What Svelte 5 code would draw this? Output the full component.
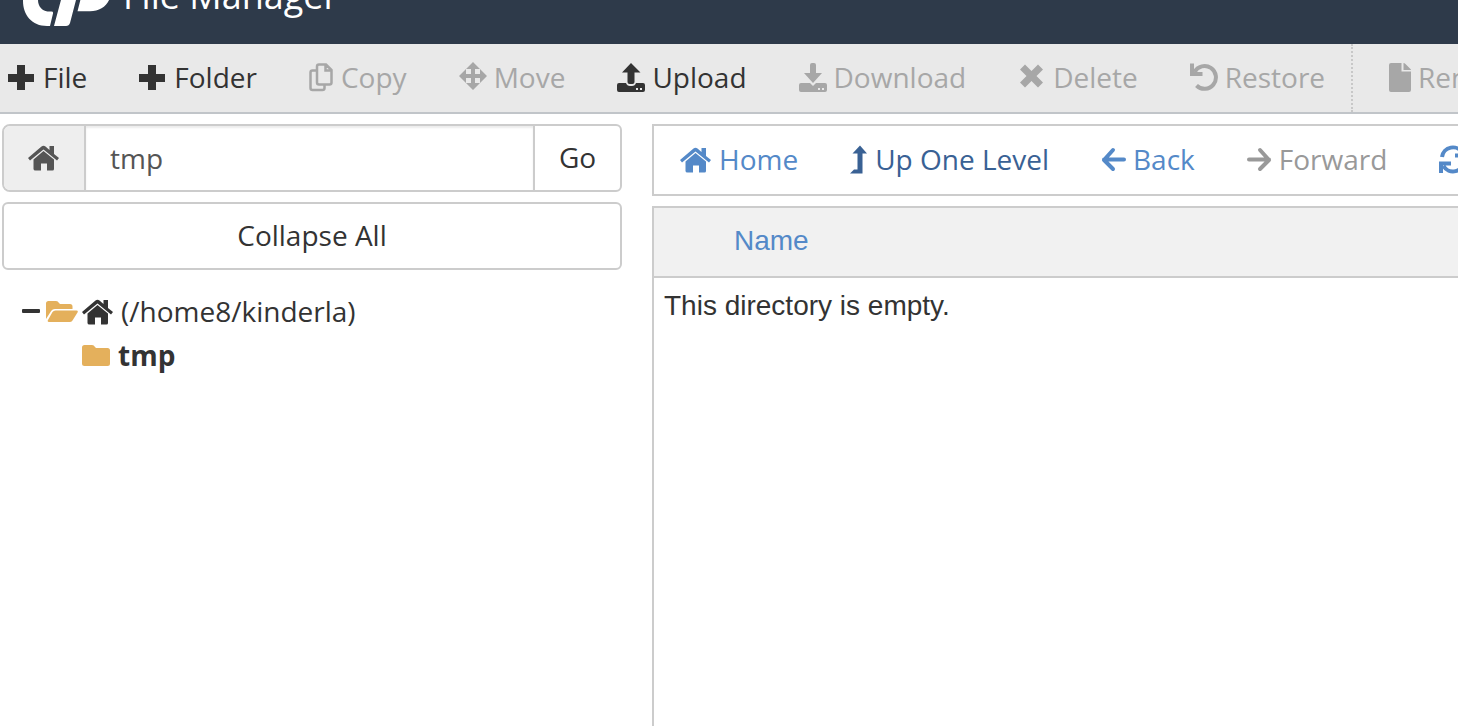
<script>
  // Each icon is drawn on a 32px high canvas
  const icons = {
    plus: { w: 28, d: 'M9 3h8v9h9v8h-9v8H9v-8H0v-8h9z' },
    move: {
      w: 28,
      d: 'M14 0l7 7h-5v5h5V7l7 7-7 7v-5h-5v5h5l-7 7-7-7h5v-5H7v5l-7-7 7-7v5h5V7H7z'
    },
    upload: {
      w: 28,
      d: 'M14 1l9.500 9.500h-6V20q0 2-2 2h-3q-2 0-2-2V10.500H5zM2 21h7q1 3 4 3h2q3 0 4-3h7q2 0 2 2v5q0 2-2 2H2q-2 0-2-2v-5q0-2 2-2zM19 26v2h2v-2zM23 26v2h2v-2z'
    },
    download: {
      w: 28,
      d: 'M11 3q0-2 2-2h2q2 0 2 2v8h6l-9 10-9-10h6zM2 21h9l3 3 3-3h9q2 0 2 2v5q0 2-2 2H2q-2 0-2-2v-5q0-2 2-2zM19 26v2h2v-2zM23 26v2h2v-2z'
    },
    times: {
      w: 28,
      d: 'M7 2.500l6.500 6.500L20 2.500l5 5-6.500 6.500 6.500 6.500-5 5-6.500-6.500L7 25.500l-5-5L8.500 14 2 7.500z'
    },
    file: {
      w: 22,
      d: 'M2 1h10.500v8.500H22V28q0 2-2 2H2q-2 0-2-2V3q0-2 2-2zM14.500 1q1 0 2 1l5 5q.5.5.5 1h-7.500z'
    },
    home: {
      w: 32,
      d: 'M15.500 9L26 17.500V27q0 1.500-1.500 1.500H19v-7h-6v7H7.500Q5.500 28.500 5.500 27v-9.500zM13.500 4.500q2-1.500 4 0l4 3.500V4H26v8l5 4-2 2.500L15.500 7.500 2 18.500 0 16z'
    },
    folder: {
      w: 28,
      d: 'M2.500 5H10q2 0 3 2l1 1h11.500Q28 8 28 10.500v13q0 2.500-2.500 2.500h-23Q0 26 0 23.500v-16Q0 5 2.500 5z'
    },
    folderOpen: {
      w: 32,
      d: 'M2.500 5H10q2 0 3 2l1 1h10q2.500 0 2.500 2.500V13H9q-3 0-4.500 3L0 23V7.500Q0 5 2.500 5zM9.500 14.500h21q2 0 1 2l-5 8q-1 1.500-3 1.500H3q-2 0-1-2L6.500 16q1-1.500 3-1.500z'
    },
    up: { w: 18, d: 'M10 1.500l7 8h-4.500v20H0l4-4h3.500v-16H2.500z' },
    minus: { w: 18, d: 'M1 13h16q1 0 1 1v2q0 1-1 1H1q-1 0-1-1v-2q0-1 1-1z' },
    copy: {
      w: 25,
      line: 2.5,
      d: 'M7.500 8.500H3.500q-2 0-2 2v15.500q0 2 2 2h10q2 0 2-2v-3.500M10 2.500h7l5.500 5.500v12.500q0 2-2 2H10q-2 0-2-2v-16q0-2 2-2M16.500 3v5.500H22'
    },
    undo: {
      w: 28,
      line: 4,
      d: 'M2 1.500V12h10.500M4.500 10A11.400 11.400 0 1 1 6.500 23.500'
    },
    back: { w: 25, line: 4, cap: 'round', d: 'M12 6L3 16l9 9M3 15.500h20' },
    forward: { w: 25, line: 4, cap: 'round', d: 'M13 6l9 10-9 9M22 15.500H2' },
    reload: {
      w: 28,
      line: 4,
      d: 'M3 13A11 11 0 0 1 23.500 9M26 2v9.500H16M25 17A11 11 0 0 1 4.500 22M2 29v-9.500h10'
    }
  };

  const actions = [
    { icon: 'plus', label: 'File' },
    { icon: 'plus', label: 'Folder' },
    { icon: 'copy', label: 'Copy', disabled: true },
    { icon: 'move', label: 'Move', disabled: true },
    { icon: 'upload', label: 'Upload' },
    { icon: 'download', label: 'Download', disabled: true },
    { icon: 'times', label: 'Delete', disabled: true },
    { icon: 'undo', label: 'Restore', disabled: true },
    { icon: 'file', label: 'Rename', disabled: true, separator: true }
  ];

  const navigation = [
    { icon: 'home', label: 'Home' },
    { icon: 'up', label: 'Up One Level', active: true },
    { icon: 'back', label: 'Back' },
    { icon: 'forward', label: 'Forward', disabled: true },
    { icon: 'reload', label: 'Reload' }
  ];

  let path = $state('tmp');
</script>

{#snippet icon(name)}
  {@const shape = icons[name]}
  <svg class="icon" width={shape.w} height="32" viewBox="0 0 {shape.w} 32" aria-hidden="true">
    {#if shape.line}
      <path
        d={shape.d}
        fill="none"
        stroke="currentColor"
        stroke-width={shape.line}
        stroke-linecap={shape.cap ?? 'butt'}
        stroke-linejoin={shape.cap ?? 'miter'}
      />
    {:else}
      <path d={shape.d} fill="currentColor" fill-rule="evenodd" />
    {/if}
  </svg>
{/snippet}

<div class="file-manager">
  <header>
    <svg class="logo" width="90" height="56" viewBox="0 0 90 56" aria-hidden="true">
      <path
        fill="#fff"
        d="M24 56C9 56 0 45 0 31 0 16 10 6 23 6h16l-4 13H25c-6 0-10 5-10 11 0 6 4 11 9.500 11.500h4q2 0 1.500 2L27 56zM31 56L46 0h15l-8 30-6 23q-1 3-4 3zM54.500 41.300L65 0c14 0 23 9 23 21 0 12-9 20.300-21 20.300z"
      />
    </svg>
    <h1>File Manager</h1>
  </header>

  <div class="toolbar">
    {#each actions as action}
      <button class="action" class:separator={action.separator} disabled={action.disabled}>
        {@render icon(action.icon)}
        {action.label}
      </button>
    {/each}
  </div>

  <div class="content">
    <aside>
      <div class="location">
        <button class="home-btn" aria-label="Home">{@render icon('home')}</button>
        <input type="text" aria-label="Path" bind:value={path} />
        <button class="go-btn">Go</button>
      </div>
      <button class="collapse-btn">Collapse All</button>

      <ul class="tree">
        <li>
          <div class="node">
            <button class="toggle" aria-label="Collapse">{@render icon('minus')}</button>
            <span class="folder">{@render icon('folderOpen')}</span>
            <span class="root-home">{@render icon('home')}</span>
            <span>(/home8/kinderla)</span>
          </div>
          <ul>
            <li class="node child">
              <span class="folder">{@render icon('folder')}</span>
              <strong>tmp</strong>
            </li>
          </ul>
        </li>
      </ul>
    </aside>

    <main>
      <nav>
        {#each navigation as item}
          <button class="nav-btn" class:active={item.active} disabled={item.disabled}>
            {@render icon(item.icon)}
            {item.label}
          </button>
        {/each}
      </nav>

      <table>
        <thead>
          <tr><th><a href="#name">Name</a></th></tr>
        </thead>
        <tbody>
          <tr><td>This directory is empty.</td></tr>
        </tbody>
      </table>
    </main>
  </div>
</div>

<style>
  :global(body) {
    margin: 0;
    background: #fff;
  }

  .file-manager {
    display: flex;
    flex-direction: column;
    height: 100vh;
    overflow: hidden;
    color: #333;
    font-family: 'Open Sans', sans-serif;
    font-size: 28px;
    line-height: 40px;
  }

  button,
  input {
    margin: 0;
    padding: 0;
    border: 0;
    background: none;
    color: inherit;
    font: inherit;
  }

  button {
    cursor: pointer;
  }

  button:disabled {
    cursor: default;
  }

  .icon {
    flex: none;
    display: block;
    margin-top: 2px;
  }

  header {
    display: flex;
    flex: none;
    align-items: flex-end;
    gap: 10px;
    height: 44px;
    padding-left: 23px;
    overflow: hidden;
    background: #2e3a4a;
    color: #fff;
  }

  .logo {
    flex: none;
    margin-bottom: 18px;
  }

  h1 {
    margin: 0 0 28px;
    font-size: 36px;
    font-weight: 400;
  }

  .toolbar {
    display: flex;
    flex: none;
    height: 68px;
    overflow: hidden;
    border-bottom: 2px solid #c1c5c9;
    background: #e9e9e9;
  }

  .action,
  .nav-btn {
    display: flex;
    flex: none;
    align-items: center;
    gap: 7px;
    padding: 0 26px 2px;
    white-space: nowrap;
  }

  .action:first-child {
    padding-left: 8px;
  }

  .action:disabled {
    color: #a7a7a7;
  }

  .action.separator {
    padding-left: 36px;
    border-left: 2px dotted #c8c8c8;
  }

  .content {
    display: flex;
    flex: 1;
    gap: 30px;
    min-height: 0;
    padding: 10px 0 0 2px;
  }

  aside {
    flex: none;
    width: 620px;
  }

  .location {
    display: flex;
    height: 68px;
    box-sizing: border-box;
    border: 2px solid #ccc;
    border-radius: 8px 6px 6px 8px;
    overflow: hidden;
  }

  .home-btn {
    display: flex;
    align-items: center;
    justify-content: center;
    width: 80px;
    padding-bottom: 2px;
    background: #eee;
    color: #555;
  }

  .location input {
    flex: 1;
    min-width: 0;
    padding: 0 24px;
    border: solid #ccc;
    border-width: 0 2px;
    box-shadow: inset 0 2px 2px rgba(0, 0, 0, 0.08);
    color: #555;
  }

  .go-btn {
    width: 85px;
    padding-bottom: 2px;
  }

  .collapse-btn {
    width: 100%;
    height: 68px;
    margin-top: 10px;
    padding-bottom: 2px;
    border: 2px solid #ccc;
    border-radius: 6px;
  }

  ul {
    margin: 0;
    padding: 0;
    list-style: none;
  }

  .tree {
    margin-top: 19px;
    padding-left: 20px;
  }

  .node {
    display: flex;
    align-items: center;
    height: 44px;
  }

  .folder {
    margin-left: 6px;
    color: #e4b05c;
  }

  .root-home {
    margin: 0 7px 0 4px;
  }

  .child {
    padding-left: 54px;
  }

  .child strong {
    margin-left: 8px;
  }

  main {
    display: flex;
    flex: 1;
    flex-direction: column;
    min-width: 0;
  }

  nav {
    display: flex;
    flex: none;
    height: 68px;
    overflow: hidden;
    border: 2px solid #ccc;
    border-right: 0;
  }

  .nav-btn {
    color: #5489c8;
  }

  .nav-btn.active {
    color: #396194;
  }

  .nav-btn:disabled {
    color: #999;
  }

  table {
    flex: 1;
    display: block;
    margin-top: 10px;
    border: solid #ccc;
    border-width: 2px 0 0 2px;
    font-family: 'Liberation Sans', Arial, sans-serif;
  }

  thead,
  tbody,
  tr,
  th,
  td {
    display: block;
  }

  th {
    height: 68px;
    padding: 0 0 0 80px;
    border-bottom: 2px solid #ccc;
    background: #f1f1f1;
    font-weight: 400;
    line-height: 66px;
    text-align: left;
  }

  th a {
    color: #5489c8;
    text-decoration: none;
  }

  td {
    padding: 8px 10px;
  }
</style>
